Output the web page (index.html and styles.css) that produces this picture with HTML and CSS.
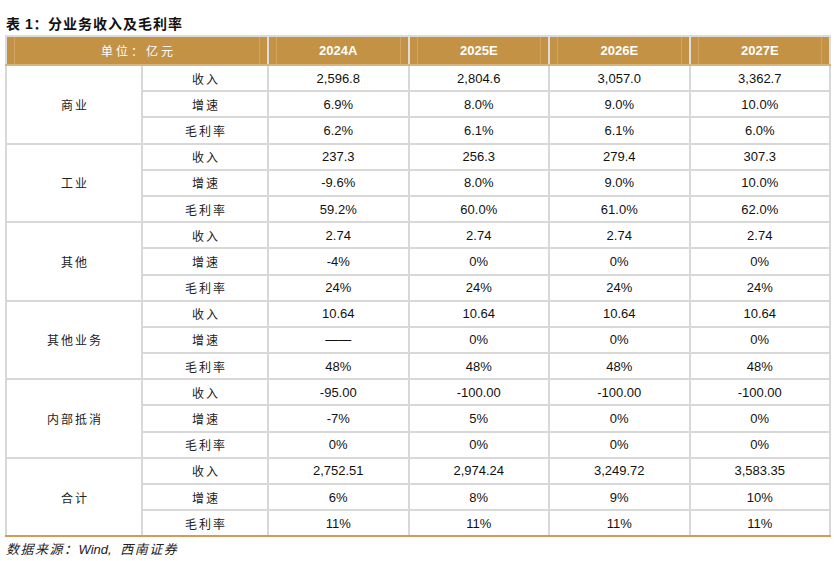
FILE: index.html
```html
<!DOCTYPE html>
<html lang="zh">
<head>
<meta charset="utf-8">
<link rel="stylesheet" href="styles.css">
</head>
<body>
<div class="page">
  <h1 class="title">表 1：<span class="title-cn">分业务收入及毛利率</span></h1>
  <table class="tbl">
    <colgroup>
      <col class="c-seg"><col class="c-item"><col class="c-yr"><col class="c-yr"><col class="c-yr"><col class="c-yr">
    </colgroup>
    <thead>
      <tr>
        <th colspan="2" class="cn-h">单位：亿元</th>
        <th>2024A</th><th>2025E</th><th>2026E</th><th>2027E</th>
      </tr>
    </thead>
    <tbody>
      <tr><td rowspan="3" class="cn">商业</td><td class="cn">收入</td><td>2,596.8</td><td>2,804.6</td><td>3,057.0</td><td>3,362.7</td></tr>
      <tr><td class="cn">增速</td><td>6.9%</td><td>8.0%</td><td>9.0%</td><td>10.0%</td></tr>
      <tr><td class="cn">毛利率</td><td>6.2%</td><td>6.1%</td><td>6.1%</td><td>6.0%</td></tr>

      <tr><td rowspan="3" class="cn">工业</td><td class="cn">收入</td><td>237.3</td><td>256.3</td><td>279.4</td><td>307.3</td></tr>
      <tr><td class="cn">增速</td><td>-9.6%</td><td>8.0%</td><td>9.0%</td><td>10.0%</td></tr>
      <tr><td class="cn">毛利率</td><td>59.2%</td><td>60.0%</td><td>61.0%</td><td>62.0%</td></tr>

      <tr><td rowspan="3" class="cn">其他</td><td class="cn">收入</td><td>2.74</td><td>2.74</td><td>2.74</td><td>2.74</td></tr>
      <tr><td class="cn">增速</td><td>-4%</td><td>0%</td><td>0%</td><td>0%</td></tr>
      <tr><td class="cn">毛利率</td><td>24%</td><td>24%</td><td>24%</td><td>24%</td></tr>

      <tr><td rowspan="3" class="cn">其他业务</td><td class="cn">收入</td><td>10.64</td><td>10.64</td><td>10.64</td><td>10.64</td></tr>
      <tr><td class="cn">增速</td><td>——</td><td>0%</td><td>0%</td><td>0%</td></tr>
      <tr><td class="cn">毛利率</td><td>48%</td><td>48%</td><td>48%</td><td>48%</td></tr>

      <tr><td rowspan="3" class="cn">内部抵消</td><td class="cn">收入</td><td>-95.00</td><td>-100.00</td><td>-100.00</td><td>-100.00</td></tr>
      <tr><td class="cn">增速</td><td>-7%</td><td>5%</td><td>0%</td><td>0%</td></tr>
      <tr><td class="cn">毛利率</td><td>0%</td><td>0%</td><td>0%</td><td>0%</td></tr>

      <tr><td rowspan="3" class="cn last">合计</td><td class="cn">收入</td><td>2,752.51</td><td>2,974.24</td><td>3,249.72</td><td>3,583.35</td></tr>
      <tr><td class="cn">增速</td><td>6%</td><td>8%</td><td>9%</td><td>10%</td></tr>
      <tr class="last-row"><td class="cn">毛利率</td><td>11%</td><td>11%</td><td>11%</td><td>11%</td></tr>
    </tbody>
  </table>
  <p class="source"><span class="src-cn">数据来源：</span>Wind, <span class="src-cn src-gap">西南证券</span></p>
</div>
</body>
</html>
```
FILE: styles.css
```css
html, body {
  margin: 0;
  padding: 0;
  background: #ffffff;
}

body {
  font-family: "Liberation Sans", "Noto Sans CJK SC", sans-serif;
  color: #000;
}

.page {
  width: 834px;
  padding-top: 16px;
}

.title {
  margin: 0 0 3px 6px;
  font-family: "Liberation Sans", "Noto Sans CJK SC", sans-serif;
  font-size: 14px;
  line-height: 16px;
  font-weight: bold;
  letter-spacing: 0.6px;
  color: #111;
}

.title-cn {
  letter-spacing: 1px;
}

.tbl {
  margin-left: 5px;
  width: 824px;
  border-collapse: collapse;
  table-layout: fixed;
}

.c-seg { width: 136px; }
.c-item { width: 126px; }
.c-yr { width: 140.5px; }

.tbl th {
  height: 27px;
  padding: 0;
  background-color: #C39245;
  background-image:
    linear-gradient(to right, transparent 7px, #D2A662 7px, #D2A662 8px, transparent 8px),
    linear-gradient(to left, transparent 7px, #D2A662 7px, #D2A662 8px, transparent 8px);
  color: #fff;
  font-size: 13px;
  font-weight: bold;
  text-align: center;
  border: 2px solid #dcdcdc;
  border-bottom: 2px solid #D8B47A;
}

.tbl th.cn-h {
  font-family: "Noto Sans CJK SC", sans-serif;
  font-weight: normal;
  font-size: 12px;
  letter-spacing: 3px;
  padding-left: 3px;
}

.tbl td {
  height: 24.2px;
  padding: 0;
  text-align: center;
  font-size: 13px;
  color: #111;
  border: 2px solid #d8d8d8;
}

.tbl td.cn {
  font-family: "Noto Sans CJK SC", sans-serif;
  font-size: 12px;
  letter-spacing: 2px;
  padding-left: 2px;
  color: #222;
}

.tbl tr.last-row td,
.tbl td.last {
  border-bottom: 2px solid #D29C55;
}

.source {
  margin: 5px 0 0 6px;
  font-family: "Liberation Sans", "Noto Sans CJK SC", sans-serif;
  font-size: 13px;
  line-height: 16px;
  font-style: italic;
  color: #222;
}

.src-cn {
  letter-spacing: 1.5px;
}

.src-gap {
  margin-left: 5px;
}
```
